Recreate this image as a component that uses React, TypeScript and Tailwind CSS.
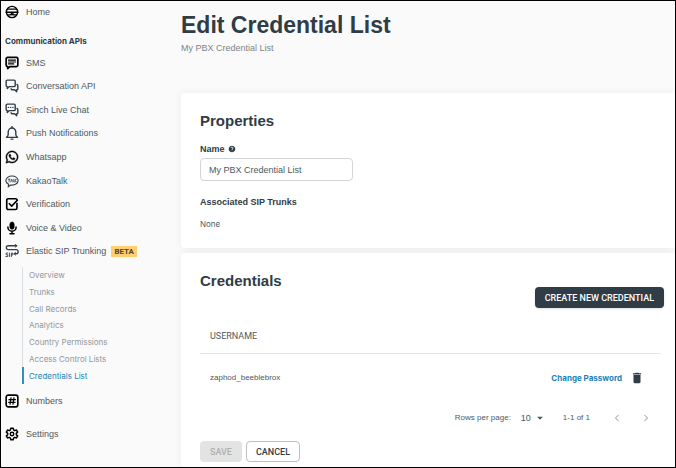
import type { ReactNode } from "react";
import { FaWhatsapp } from "react-icons/fa";
import { MdDelete, MdHelp, MdArrowDropDown, MdChevronLeft, MdChevronRight } from "react-icons/md";

function Glyph({ children }: { children: ReactNode }) {
  return (
    <svg viewBox="0 0 24 24" className="size-3.5 shrink-0" fill="none" stroke="currentColor" strokeWidth="2.4" strokeLinejoin="round" strokeLinecap="round" aria-hidden="true">
      {children}
    </svg>
  );
}

const HomeIcon = () => (
  <Glyph>
    <circle cx="12" cy="12" r="9.6" />
    <path d="M4.500 7h15" strokeWidth="2" />
    <path d="M2 12.500h20" strokeWidth="2.800" />
    <path d="M4 17h4.500M15.500 17H20" strokeWidth="2" />
    <path d="M12 12.500l-3 4.500h6z" fill="currentColor" strokeWidth="1.500" />
  </Glyph>
);

const SmsIcon = () => (
  <Glyph>
    <path d="M4.500 2.500h15a2.500 2.500 0 0 1 2.500 2.500v10.500a2.500 2.500 0 0 1-2.500 2.500H8.500L4.500 21.500V18A2.500 2.500 0 0 1 2 15.500V5a2.500 2.500 0 0 1 2.500-2.500z" strokeWidth="3" />
    <path d="M6 7h12M6 10.300h12M6 13.600h9" strokeWidth="2" />
  </Glyph>
);

const bubbles = (
  <>
    <path d="M4 2h11.500a2 2 0 0 1 2 2v7a2 2 0 0 1-2 2H7.500L4 16.500V13a2 2 0 0 1-2-2V4a2 2 0 0 1 2-2z" />
    <path d="M20.500 9.500a2 2 0 0 1 1.500 2v5a2 2 0 0 1-2 2v3.500L16.500 18.500h-4a2 2 0 0 1-2-2" />
  </>
);

const ConversationIcon = () => <Glyph>{bubbles}</Glyph>;

const ChatIcon = () => (
  <Glyph>
    {bubbles}
    <path d="M5.800 7.500h.2M9.700 7.500h.2M13.600 7.500h.2" />
  </Glyph>
);

const BellIcon = () => (
  <Glyph>
    <path d="M2.500 19.500h19c-2.200-1.500-3-3-3-5.500v-4a6.500 6.500 0 0 0-13 0v4c0 2.500-.8 4-3 5.500z" strokeWidth="2.400" />
    <path d="M12 3V1M10.500 22.500h3" />
  </Glyph>
);

const WhatsappIcon = () => <FaWhatsapp className="size-3.5 shrink-0 stroke-current stroke-[16]" aria-hidden="true" />;

const KakaoIcon = () => (
  <Glyph>
    <path d="M12 3.500c5.800 0 10.500 3.400 10.500 7.800S17.800 19 12 19c-.8 0-1.500 0-2.200-.2L5.500 22l.8-4.300C3.300 16.300 1.500 14 1.500 11.300 1.500 6.900 6.200 3.500 12 3.500z" strokeWidth="1.900" />
    <path d="M5.500 9h3.200M7.100 9v4.500M9.800 13.500l1.400-4.500 1.400 4.500M14.200 9v4.500h1.500M17.300 9v4.500M19.300 9l-1.800 2.200 1.800 2.300" strokeWidth="1.300" />
  </Glyph>
);

const CheckIcon = () => (
  <Glyph>
    <path d="M20.500 11v8a2.500 2.500 0 0 1-2.500 2.500H5.500A2.500 2.500 0 0 1 3 19V5.500A2.500 2.500 0 0 1 5.500 3H18a2.500 2.500 0 0 1 2.500 2.500" strokeWidth="2.800" />
    <path d="M7.500 11.500l4 4.200L21 5.500" strokeWidth="2.800" />
  </Glyph>
);

const MicIcon = () => (
  <Glyph>
    <rect x="8.500" y="2" width="7" height="12" rx="3.500" fill="currentColor" strokeWidth="1.500" />
    <path d="M5 10.500c0 4 3 7 7 7s7-3 7-7M12 17.500V22M8.500 22h7" strokeWidth="2.600" />
  </Glyph>
);

const SipIcon = () => (
  <Glyph>
    <path d="M20 3H5.500a3.200 3.200 0 0 0 0 6.500H19a3.600 3.600 0 0 1 0 7.200h-3" strokeWidth="2.200" />
    <path d="M17.500 .8L20.500 3l-3 2.400M18 14.500l-2.500 2.200L18 19" strokeWidth="1.600" />
    <path d="M4.800 15.500H2v3h2.800v3H1.500M7.800 15.500v6M11 21.500v-6h2.500v3.200H11" strokeWidth="1.500" />
  </Glyph>
);

const HashIcon = () => (
  <Glyph>
    <rect x="2" y="2" width="20" height="20" rx="3.500" strokeWidth="2.800" />
    <path d="M10.300 6.500L8.700 17.500M15.300 6.500l-1.600 11M6.800 9.800h11M6.300 14.200h11" strokeWidth="2.200" />
  </Glyph>
);

const GearIcon = () => (
  <Glyph>
    <path d="M10 2h4l.7 3 2 1.200 3-.9 2 3.400-2.300 2.100v2.400l2.300 2.100-2 3.400-3-.9-2 1.200-.7 3h-4l-.7-3-2-1.200-3 .9-2-3.400 2.300-2.100v-2.400L2.300 8.700l2-3.400 3 .9 2-1.200z" strokeWidth="2.600" />
    <circle cx="12" cy="12" r="3" />
  </Glyph>
);

type Item = { label: string; icon: () => ReactNode; dark?: boolean; badge?: string };

const apis: Item[] = [
  { label: "SMS", icon: SmsIcon, dark: true },
  { label: "Conversation API", icon: ConversationIcon },
  { label: "Sinch Live Chat", icon: ChatIcon },
  { label: "Push Notifications", icon: BellIcon },
  { label: "Whatsapp", icon: WhatsappIcon, dark: true },
  { label: "KakaoTalk", icon: KakaoIcon },
  { label: "Verification", icon: CheckIcon, dark: true },
  { label: "Voice & Video", icon: MicIcon, dark: true },
  { label: "Elastic SIP Trunking", icon: SipIcon, badge: "BETA" },
];

const sub = ["Overview", "Trunks", "Call Records", "Analytics", "Country Permissions", "Access Control Lists", "Credentials List"];

function NavItem({ label, icon: Icon, dark, badge }: Item) {
  return (
    <a href="#" className="flex items-center gap-[7px] text-[#4d5962]">
      <span className={dark ? "text-black" : "text-[#303c46]"}>
        <Icon />
      </span>
      <span>{label}</span>
      {badge && <span className="-ml-0.5 bg-[#ffcf70] px-[3px] font-['Roboto',sans-serif] text-[8px] leading-[11px] font-bold text-[#4f4632]">{badge}</span>}
    </a>
  );
}

export default function App() {
  return (
    <div className="flex min-h-screen border border-black bg-[#fafafa] font-['Liberation_Sans',Arial,sans-serif] text-[9px] leading-3 text-[#4d5962]">
      <aside className="w-[180px] shrink-0 pl-1 pt-1">
        <NavItem label="Home" icon={HomeIcon} dark />
        <h2 className="mt-4 font-['Inter',sans-serif] text-[8px] font-bold text-[#303c46]">Communication APIs</h2>
        <nav className="mt-1 grid h-[212px] auto-rows-fr">
          {apis.map((item) => (
            <NavItem key={item.label} {...item} />
          ))}
        </nav>
        <nav className="ml-[17px] mt-1 grid h-[117px] auto-rows-fr font-['Inter',sans-serif] text-[8px] text-[#8f979d]">
          {sub.map((label) =>
            label === "Credentials List" ? (
              <a key={label} href="#" aria-current="page" className="flex items-center border-l-2 border-[#2f8fc0] pl-[5px] text-[#2383b8]">
                {label}
              </a>
            ) : (
              <a key={label} href="#" className="flex items-center border-l border-[#dcdfe1] pl-1.5">
                {label}
              </a>
            ),
          )}
        </nav>
        <div className="mt-2.5 flex flex-col gap-[19px]">
          <NavItem label="Numbers" icon={HashIcon} dark />
          <NavItem label="Settings" icon={GearIcon} dark />
        </div>
      </aside>

      <main className="flex min-w-0 flex-1 flex-col">
        <header className="h-[92px] pt-2.5">
          <h1 className="text-[23px] leading-7 font-bold text-[#303c46]">Edit Credential List</h1>
          <p className="mt-[3px] text-[#7a848b]">My PBX Credential List</p>
        </header>

        <section className="rounded-l-sm bg-white px-[19px] pb-[18px] pt-[18px] shadow-[0_0_8px_rgba(0,0,0,0.06)]">
          <h2 className="text-[15px] leading-5 font-bold text-[#303c46]">Properties</h2>
          <div className="mt-3 flex items-center gap-[3px] font-bold text-[#303c46]">
            <label htmlFor="list-name">Name</label>
            <MdHelp className="size-2" aria-hidden="true" />
          </div>
          <input
            id="list-name"
            defaultValue="My PBX Credential List"
            className="mt-[3px] block h-[23px] w-[153px] rounded-sm border border-[#d3d6d8] bg-white px-2 text-[#4d5962]"
          />
          <h3 className="mt-[15px] font-bold text-[#303c46]">Associated SIP Trunks</h3>
          <p className="mt-2.5 font-['Inter',sans-serif] text-[8px]">None</p>
        </section>

        <section className="mt-[5px] flex-1 rounded-l-sm bg-white pb-[5px] pl-[19px] pr-[11px] pt-[18px] font-['Roboto',sans-serif] shadow-[0_0_8px_rgba(0,0,0,0.06)]">
          <h2 className="font-['Liberation_Sans',Arial,sans-serif] text-[15px] leading-5 font-bold text-[#303c46]">Credentials</h2>
          <div className="-mt-1 flex justify-end">
            <button type="button" className="h-[21px] rounded-sm bg-[#303c46] px-2.5 font-medium text-white shadow-sm">
              CREATE NEW CREDENTIAL
            </button>
          </div>
          <div className="mr-[3px]">
            <table className="mt-2.5 w-full text-left">
              <thead>
                <tr className="h-[35px] border-b border-[#e3e5e6]">
                  <th scope="col" className="pl-2.5 pt-0.5 font-normal">USERNAME</th>
                  <th scope="col" aria-label="Actions" />
                </tr>
              </thead>
              <tbody>
                <tr className="h-[49px]">
                  <td className="pl-2.5 font-['Liberation_Sans',Arial,sans-serif] text-[8px]">zaphod_beeblebrox</td>
                  <td>
                    <div className="flex items-center justify-end gap-2 pr-[17px]">
                      <a href="#" className="font-['Inter',sans-serif] text-[8px] font-bold text-[#1c7fb8]">Change Password</a>
                      <button type="button" aria-label="Delete" className="text-[#303c46]">
                        <MdDelete className="size-3.5" />
                      </button>
                    </div>
                  </td>
                </tr>
              </tbody>
            </table>
            <div className="mt-1 flex h-6 items-center justify-end pr-2 font-['Liberation_Sans',Arial,sans-serif] text-[8px]">
              <label htmlFor="rows">Rows per page:</label>
              <span className="relative ml-2.5 flex items-center">
                <select id="rows" defaultValue="10" className="w-6 appearance-none bg-transparent text-[9px]">
                  <option>10</option>
                </select>
                <MdArrowDropDown className="pointer-events-none absolute -right-0.5 size-3.5" aria-hidden="true" />
              </span>
              <span className="ml-[18px]">1-1 of 1</span>
              <button type="button" aria-label="Previous page" className="ml-5 text-[#b5babe]">
                <MdChevronLeft className="size-3.5" />
              </button>
              <button type="button" aria-label="Next page" className="ml-[15px] text-[#b5babe]">
                <MdChevronRight className="size-3.5" />
              </button>
            </div>
          </div>
          <div className="mt-[11px] flex gap-1">
            <button type="button" disabled className="h-[21px] rounded-sm bg-[#e3e3e3] px-2.5 font-medium text-[#b0b0b0]">
              SAVE
            </button>
            <button type="button" className="h-[21px] rounded-sm border border-[#b9bfc4] bg-white px-[9px] font-medium text-[#303c46]">
              CANCEL
            </button>
          </div>
        </section>
      </main>
    </div>
  );
}
